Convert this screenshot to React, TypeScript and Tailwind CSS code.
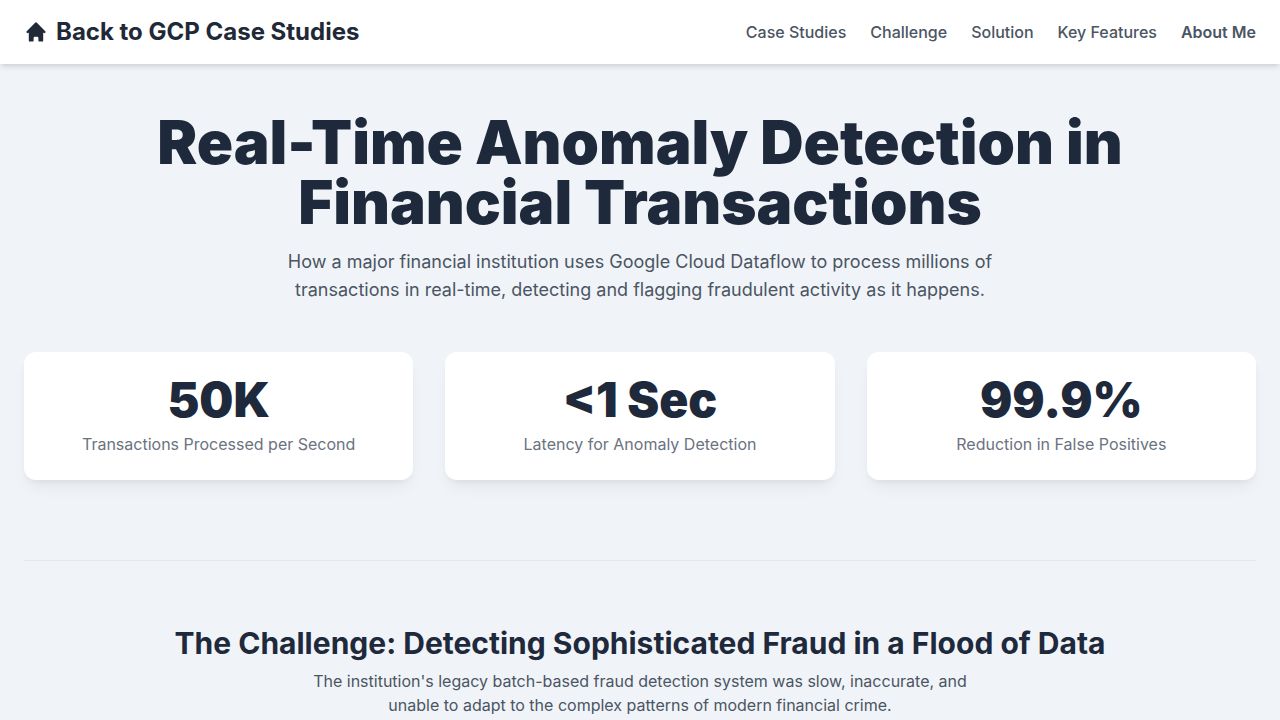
const navLinks = [
  { label: "Case Studies", href: "#case-studies" },
  { label: "Challenge", href: "#challenge" },
  { label: "Solution", href: "#solution" },
  { label: "Key Features", href: "#features" },
];

const stats = [
  { value: "50K", label: "Transactions Processed per Second" },
  { value: "<1 Sec", label: "Latency for Anomaly Detection" },
  { value: "99.9%", label: "Reduction in False Positives" },
];

function HomeIcon() {
  return (
    <svg className="h-6 w-6" viewBox="0 0 20 20" fill="currentColor" aria-hidden="true">
      <path d="M10.707 2.293a1 1 0 00-1.414 0l-7 7a1 1 0 001.414 1.414L4 10.414V17a1 1 0 001 1h2a1 1 0 001-1v-2a1 1 0 011-1h2a1 1 0 011 1v2a1 1 0 001 1h2a1 1 0 001-1v-6.586l.293.293a1 1 0 001.414-1.414l-7-7z" />
    </svg>
  );
}

function Header() {
  return (
    <header className="sticky top-0 z-50 bg-white shadow-md">
      <nav className="container mx-auto flex items-center justify-between px-6 py-4">
        <a href="#home" className="flex items-center gap-2 text-2xl font-bold text-[#1f2937]">
          <HomeIcon />
          <span>Back to GCP Case Studies</span>
        </a>
        <div className="flex items-center gap-6 font-medium text-[#4b5563]">
          {navLinks.map((link) => (
            <a key={link.href} href={link.href}>
              {link.label}
            </a>
          ))}
          <a href="#about" className="font-semibold">
            About Me
          </a>
        </div>
      </nav>
    </header>
  );
}

export default function App() {
  return (
    <div className="min-h-screen bg-[#f0f4f8] font-['Inter',sans-serif] text-[#1e293b]">
      <Header />
      <main className="container mx-auto px-6 py-12">
        <section className="mb-20 text-center">
          <h1 className="mb-4 text-6xl font-black">
            Real-Time Anomaly Detection in Financial Transactions
          </h1>
          <p className="mx-auto max-w-3xl text-lg text-[#4b5563]">
            How a major financial institution uses Google Cloud Dataflow to process millions of
            transactions in real-time, detecting and flagging fraudulent activity as it happens.
          </p>
          <div className="mt-12 grid grid-cols-3 gap-8">
            {stats.map((stat) => (
              <div
                key={stat.label}
                className="rounded-xl bg-white p-6 shadow-[0_10px_15px_-3px_rgba(0,0,0,0.05),0_4px_6px_-2px_rgba(0,0,0,0.05)]"
              >
                <p className="text-5xl font-black">{stat.value}</p>
                <p className="mt-2 text-[#6b7280]">{stat.label}</p>
              </div>
            ))}
          </div>
        </section>
        <section id="challenge" className="border-t border-gray-200 py-16 text-center">
          <h2 className="mb-2 text-3xl font-bold">
            The Challenge: Detecting Sophisticated Fraud in a Flood of Data
          </h2>
          <p className="mx-auto max-w-2xl text-[#4b5563]">
            The institution's legacy batch-based fraud detection system was slow, inaccurate, and
            unable to adapt to the complex patterns of modern financial crime.
          </p>
        </section>
      </main>
    </div>
  );
}
